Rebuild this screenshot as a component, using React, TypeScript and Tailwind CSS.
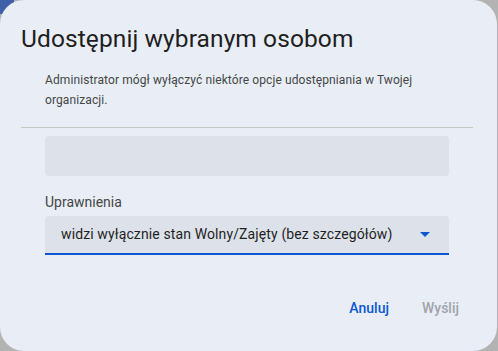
import React from "react";

export default function App() {
  return (
    <div className="relative w-[498px] h-[351px] bg-[#b3b3b3] overflow-hidden" style={{ fontFamily: "Roboto, 'Liberation Sans', sans-serif" }}>
      <div className="absolute left-0 top-0 w-[14px] h-[14px] bg-[#3f5fa8]" />
      <div className="relative w-[497px] h-[351px] rounded-[24px] bg-[#e9edf6] flex flex-col">
        <h1 className="pt-[23px] pl-[21px] text-[24.5px] leading-[32px] tracking-[0.1px] text-[#1f1f1f] font-normal">
          Udostępnij wybranym osobom
        </h1>
        <p className="mt-[15px] pl-[45px] pr-[60px] text-[12px] leading-[20px] tracking-[0.1px] text-[#444746]">
          Administrator mógł wyłączyć niektóre opcje udostępniania w Twojej organizacji.
        </p>
        <div className="mt-[17px] ml-[21px] w-[452px] h-px bg-[#c4c7c5]" />
        <div className="mt-[8px] ml-[45px] w-[404px] h-[40px] rounded-[4px] bg-[#dde2ea]" />
        <div className="mt-[16px] ml-[45px] text-[14px] leading-[20px] text-[#444746]">Uprawnienia</div>
        <div className="mt-[4px] ml-[45px] w-[404px] h-[39px] rounded-t-[4px] bg-[#dde2ea] border-b-2 border-[#0b57d0] flex items-center justify-between pl-[16px] pr-[19px]">
          <span className="text-[14px] tracking-[0.12px] text-[#1f1f1f]">widzi wyłącznie stan Wolny/Zajęty (bez szczegółów)</span>
          <svg width="10" height="5" viewBox="0 0 10 5">
            <path d="M0 0 L10 0 L5 5 Z" fill="#0b57d0" />
          </svg>
        </div>
        <div className="mt-[33px] flex justify-end items-center gap-[33px] pr-[38px] h-[40px]">
          <span className="text-[14px] font-medium text-[#0b57d0]">Anuluj</span>
          <span className="text-[14px] font-medium text-[#a0a4aa]">Wyślij</span>
        </div>
      </div>
    </div>
  );
}
